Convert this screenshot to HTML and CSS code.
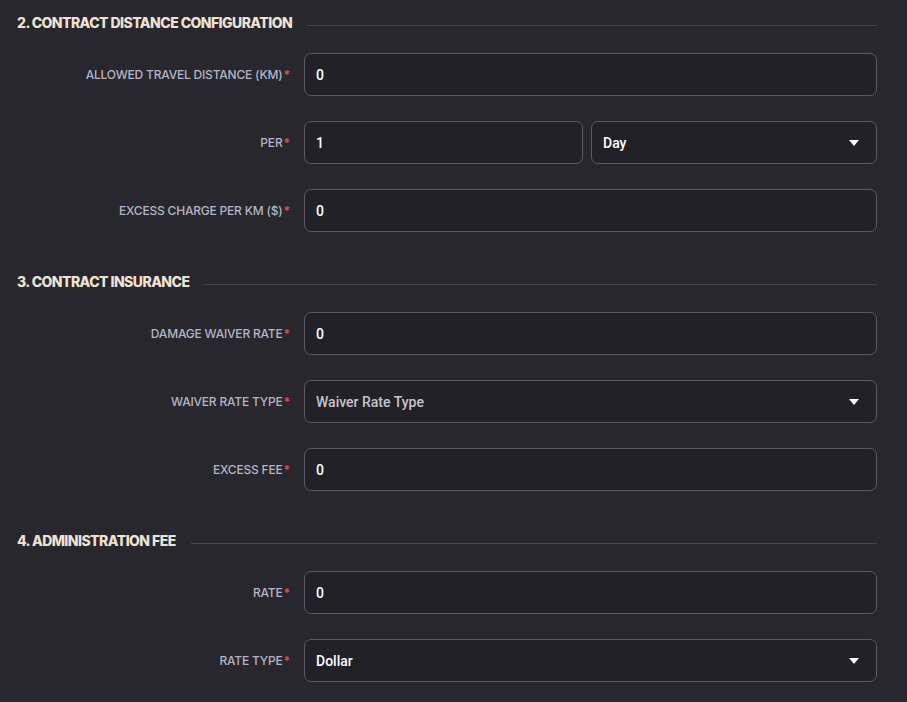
FILE: index.html
```html
<!DOCTYPE html>
<html lang="en">
<head>
    <meta charset="UTF-8">
    <meta name="viewport" content="width=device-width, initial-scale=1.0">
    <title>Contract Settings</title>
    <link rel="stylesheet" href="styles.css">
</head>
<body>
    <div class="form">
        <!-- section 2 -->
        <div class="section-title">
            <h3>2. CONTRACT DISTANCE CONFIGURATION</h3>
            <span class="line"></span>
        </div>
        <div class="row">
            <label>ALLOWED TRAVEL DISTANCE (KM)<span class="req">*</span></label>
            <div class="field"><input type="text" value="0"></div>
        </div>
        <div class="row">
            <label>PER<span class="req">*</span></label>
            <div class="field split">
                <input type="text" value="1">
                <div class="select">
                    <span>Day</span>
                    <svg width="10" height="6" viewBox="0 0 10 6"><path d="M0 0h10L5 6z" fill="#fff"/></svg>
                </div>
            </div>
        </div>
        <div class="row">
            <label>EXCESS CHARGE PER KM ($)<span class="req">*</span></label>
            <div class="field"><input type="text" value="0"></div>
        </div>

        <!-- section 3 -->
        <div class="section-title">
            <h3>3. CONTRACT INSURANCE</h3>
            <span class="line"></span>
        </div>
        <div class="row">
            <label>DAMAGE WAIVER RATE<span class="req">*</span></label>
            <div class="field"><input type="text" value="0"></div>
        </div>
        <div class="row">
            <label>WAIVER RATE TYPE<span class="req">*</span></label>
            <div class="field">
                <div class="select">
                    <span class="placeholder">Waiver Rate Type</span>
                    <svg width="10" height="6" viewBox="0 0 10 6"><path d="M0 0h10L5 6z" fill="#fff"/></svg>
                </div>
            </div>
        </div>
        <div class="row">
            <label>EXCESS FEE<span class="req">*</span></label>
            <div class="field"><input type="text" value="0"></div>
        </div>

        <!-- section 4 -->
        <div class="section-title">
            <h3>4. ADMINISTRATION FEE</h3>
            <span class="line"></span>
        </div>
        <div class="row">
            <label>RATE<span class="req">*</span></label>
            <div class="field"><input type="text" value="0"></div>
        </div>
        <div class="row">
            <label>RATE TYPE<span class="req">*</span></label>
            <div class="field">
                <div class="select">
                    <span>Dollar</span>
                    <svg width="10" height="6" viewBox="0 0 10 6"><path d="M0 0h10L5 6z" fill="#fff"/></svg>
                </div>
            </div>
        </div>
    </div>
</body>
</html>
```

FILE: styles.css
```css
body {
    margin: 0;
    padding: 0;
    background-color: #28272d;
    font-family: Roboto, "Liberation Sans", sans-serif;
    color: #fff;
}

.form {
    padding: 14px 30px 20px 17px;
}

.section-title {
    display: flex;
    align-items: center;
    height: 16px;
    margin-bottom: 23px;
}

.section-title h3 {
    margin: 0;
    font-family: Inter, Roboto, sans-serif;
    font-size: 14px;
    font-weight: 800;
    letter-spacing: -0.55px;
    color: #eee2d2;
    white-space: nowrap;
}

.section-title .line {
    flex: 1;
    height: 1px;
    margin-left: 15px;
    margin-top: 6px;
    background-color: #45444c;
}

.row {
    display: flex;
    align-items: center;
    margin-bottom: 25px;
}

.row + .section-title {
    margin-top: 41px;
}

.section-title + .row + .row {
    margin-top: 1px;
}

.row label {
    width: 273px;
    margin-right: 14px;
    text-align: right;
    font-family: Inter, Roboto, sans-serif;
    font-size: 12px;
    font-weight: 500;
    letter-spacing: -0.2px;
    color: #b6b5c7;
}

.req {
    color: #e5484d;
    font-weight: 700;
    margin-left: 1px;
}

.field {
    flex: 1;
}

.field.split {
    display: grid;
    grid-template-columns: 279px 1fr;
    gap: 8px;
}

.field input,
.select {
    box-sizing: border-box;
    width: 100%;
    height: 43px;
    padding: 0 11px;
    background-color: #222127;
    border: 1px solid #5b5a68;
    border-radius: 7px;
    color: #fff;
    font-family: Roboto, "Liberation Sans", sans-serif;
    font-size: 14px;
    font-weight: 500;
    outline: none;
}

.select {
    display: flex;
    align-items: center;
    justify-content: space-between;
    padding-right: 17px;
}

.select .placeholder {
    color: #c6c5ce;
}
```
